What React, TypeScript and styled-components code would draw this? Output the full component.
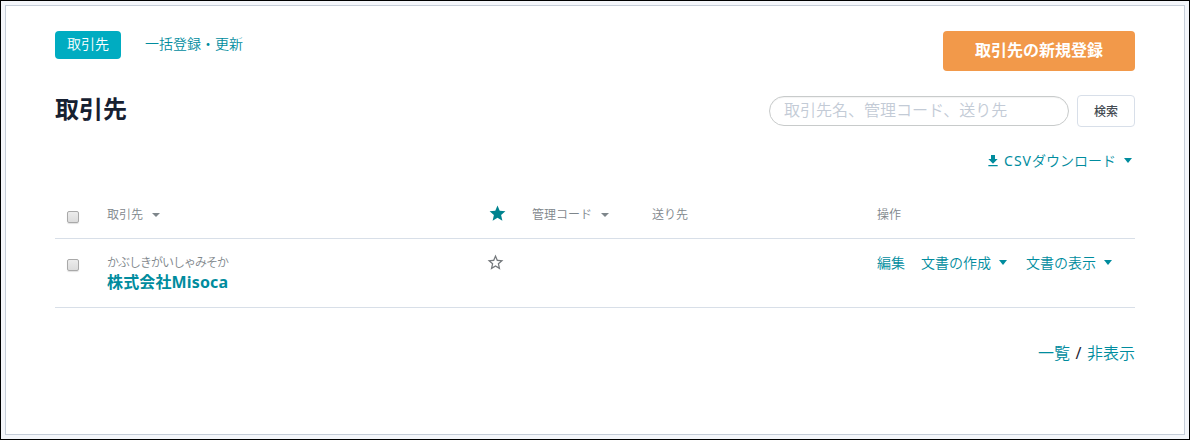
import React from 'react';
import styled, { createGlobalStyle, css } from 'styled-components';

const teal = '#008c9e';

const GlobalStyle = createGlobalStyle`
  *, *::before, *::after { box-sizing: border-box; }
  body {
    margin: 0;
    background: #f4f6fa;
    color: #1d2433;
    font-family: "Noto Sans", "Noto Sans CJK JP", sans-serif;
    font-weight: 350;
  }
`;

const Page = styled.div`
  width: 1190px;
  height: 440px;
  padding: 4px;
  border: 1px solid #000;
  background: #f4f6fa;
`;

const Panel = styled.main`
  height: 430px;
  padding: 25px 49px 0;
  border: 1px solid #c5cdd8;
  background: #fff;
`;

const TopBar = styled.div`
  display: flex;
  justify-content: space-between;
  align-items: flex-start;
  height: 40px;
`;

const Tabs = styled.nav`
  display: flex;
  gap: 12px;
`;

const Tab = styled.a<{ $active?: boolean }>`
  height: 28px;
  padding: 0 12px;
  border-radius: 4px;
  font-size: 14px;
  line-height: 26px;
  color: ${p => (p.$active ? '#fff' : teal)};
  background: ${p => (p.$active ? '#00acc1' : 'transparent')};
`;

const PrimaryButton = styled.button`
  width: 192px;
  height: 40px;
  padding: 0 0 2px;
  border: 0;
  border-radius: 4px;
  background: #f2994a;
  color: #fff;
  font: bold 16px/38px "Noto Sans", "Noto Sans CJK JP", sans-serif;
`;

const TitleBar = styled.div`
  display: flex;
  justify-content: space-between;
  margin-top: 24px;
  height: 32px;
`;

const Title = styled.h1`
  margin: 0;
  font-size: 24px;
  line-height: 28px;
  color: #162031;
`;

const SearchForm = styled.div`
  display: flex;
  align-items: center;
  gap: 8px;
`;

const SearchInput = styled.input`
  width: 300px;
  height: 30px;
  padding: 0 14px 3px;
  border: 1px solid #c8cbcb;
  border-radius: 15px;
  background: #fff;
  box-shadow: inset 0 1px 1px rgba(0, 0, 0, 0.05);
  font: 350 16px "Noto Sans", "Noto Sans CJK JP", sans-serif;
  &::placeholder { color: #c3cbd6; opacity: 1; }
`;

const SearchButton = styled.button`
  width: 58px;
  height: 32px;
  padding: 0;
  border: 1px solid #d8dfe9;
  border-radius: 4px;
  background: #fff;
  color: #444b52;
  font: 500 12px/30px "Noto Sans CJK JP", sans-serif;
`;

const Caret = styled.span`
  width: 0;
  height: 0;
  margin-left: 8px;
  margin-bottom: 1px;
  border: 4px solid transparent;
  border-top: 5px solid currentColor;
  border-bottom: 0;
`;

const Download = styled.div`
  display: flex;
  justify-content: flex-end;
  align-items: center;
  height: 20px;
  margin-top: 24px;
  padding-right: 3px;
  font-size: 14px;
  line-height: 20px;
  color: ${teal};
  svg { margin-right: 3px; }
`;

const Latin = styled.span`
  font-weight: 400;
  letter-spacing: 1px;
`;

const Slash = styled.span`
  margin: 0 5.5px;
  font-weight: 400;
`;

const Table = styled.div`
  margin-top: 19px;
`;

const Row = styled.div<{ $head?: boolean }>`
  display: grid;
  grid-template-columns: 52px 381px 44px 120px 225px 1fr;
  height: ${p => (p.$head ? 49 : 69)}px;
  padding-top: ${p => (p.$head ? 15 : 14)}px;
  border-bottom: 1px solid #d8dfe8;
  ${p => p.$head && css`
    font-size: 12px;
    line-height: 20px;
    color: #7e868b;
  `}
`;

const HeadCell = styled.div`
  display: flex;
  align-items: center;
  height: 20px;
  ${Caret} {
    margin-left: 9px;
    border-width: 4px 4px 0;
  }
`;

const Check = styled.input`
  appearance: none;
  display: block;
  width: 12px;
  height: 12px;
  margin: 6px 0 0 12px;
  border: 1px solid #a9a9a9;
  border-radius: 2px;
  background: linear-gradient(#ececec, #dcdcdc);
  box-shadow: 0 1px 1px rgba(0, 0, 0, 0.12);
`;

const StarCell = styled.div<{ $on?: boolean }>`
  margin-top: ${p => (p.$on ? -1 : 0)}px;
  margin-left: ${p => (p.$on ? 0 : -2)}px;
  color: ${p => (p.$on ? '#00838f' : '#75797d')};
  svg { display: block; }
`;

const Reading = styled.div`
  height: 20px;
  font-size: 12px;
  line-height: 20px;
  letter-spacing: -1px;
  color: #7e868b;
`;

const Company = styled.a`
  display: block;
  font-size: 16px;
  font-weight: bold;
  line-height: 18px;
  letter-spacing: 0.15px;
  color: ${teal};
`;

const Actions = styled.div`
  display: flex;
  gap: 16px;
  font-size: 14px;
  line-height: 20px;
  color: ${teal};
`;

const Action = styled.a<{ $menu?: boolean }>`
  display: flex;
  align-items: center;
  height: 20px;
  margin-right: ${p => (p.$menu ? 3 : 0)}px;
  ${Caret} { margin-bottom: 2px; }
`;

const Pager = styled.div`
  display: flex;
  justify-content: flex-end;
  margin-top: 33px;
  font-size: 16px;
  line-height: 24px;
  a { color: ${teal}; }
`;

const Icon = ({ d, size }: { d: string; size: number }) => (
  <svg width={size} height={size} viewBox="0 0 24 24" fill="currentColor" aria-hidden="true">
    <path d={d} />
  </svg>
);

const STAR = 'M12 17.27 18.18 21l-1.64-7.03L22 9.24l-7.19-.61L12 2 9.19 8.63 2 9.24l5.46 4.73L5.82 21z';
const STAR_BORDER = 'M22 9.24l-7.19-.62L12 2 9.19 8.63 2 9.24l5.46 4.73L5.82 21 12 17.27 18.18 21l-1.63-7.03L22 9.24zM12 15.4l-3.76 2.27 1-4.28-3.32-2.88 4.38-.38L12 6.1l1.71 4.04 4.38.38-3.32 2.88 1 4.28L12 15.4z';
const DOWNLOAD = 'M19 9h-4V3H9v6H5l7 7 7-7zM5 18v2h14v-2H5z';

export default function App() {
  return (
    <Page>
      <GlobalStyle />
      <Panel>
        <TopBar>
          <Tabs>
            <Tab $active>取引先</Tab>
            <Tab>一括登録・更新</Tab>
          </Tabs>
          <PrimaryButton>取引先の新規登録</PrimaryButton>
        </TopBar>
        <TitleBar>
          <Title>取引先</Title>
          <SearchForm>
            <SearchInput placeholder="取引先名、管理コード、送り先" />
            <SearchButton>検索</SearchButton>
          </SearchForm>
        </TitleBar>
        <Download>
          <Icon d={DOWNLOAD} size={16} />
          <Latin>CSV</Latin>ダウンロード
          <Caret />
        </Download>
        <Table>
          <Row $head>
            <Check type="checkbox" />
            <HeadCell>取引先<Caret /></HeadCell>
            <StarCell $on><Icon d={STAR} size={19} /></StarCell>
            <HeadCell>管理コード<Caret /></HeadCell>
            <HeadCell>送り先</HeadCell>
            <HeadCell>操作</HeadCell>
          </Row>
          <Row>
            <Check type="checkbox" />
            <div>
              <Reading>かぶしきがいしゃみそか</Reading>
              <Company>株式会社Misoca</Company>
            </div>
            <StarCell><Icon d={STAR_BORDER} size={19} /></StarCell>
            <div />
            <div />
            <Actions>
              <Action>編集</Action>
              <Action $menu>文書の作成<Caret /></Action>
              <Action $menu>文書の表示<Caret /></Action>
            </Actions>
          </Row>
        </Table>
        <Pager><a>一覧</a><Slash>/</Slash><a>非表示</a></Pager>
      </Panel>
    </Page>
  );
}
